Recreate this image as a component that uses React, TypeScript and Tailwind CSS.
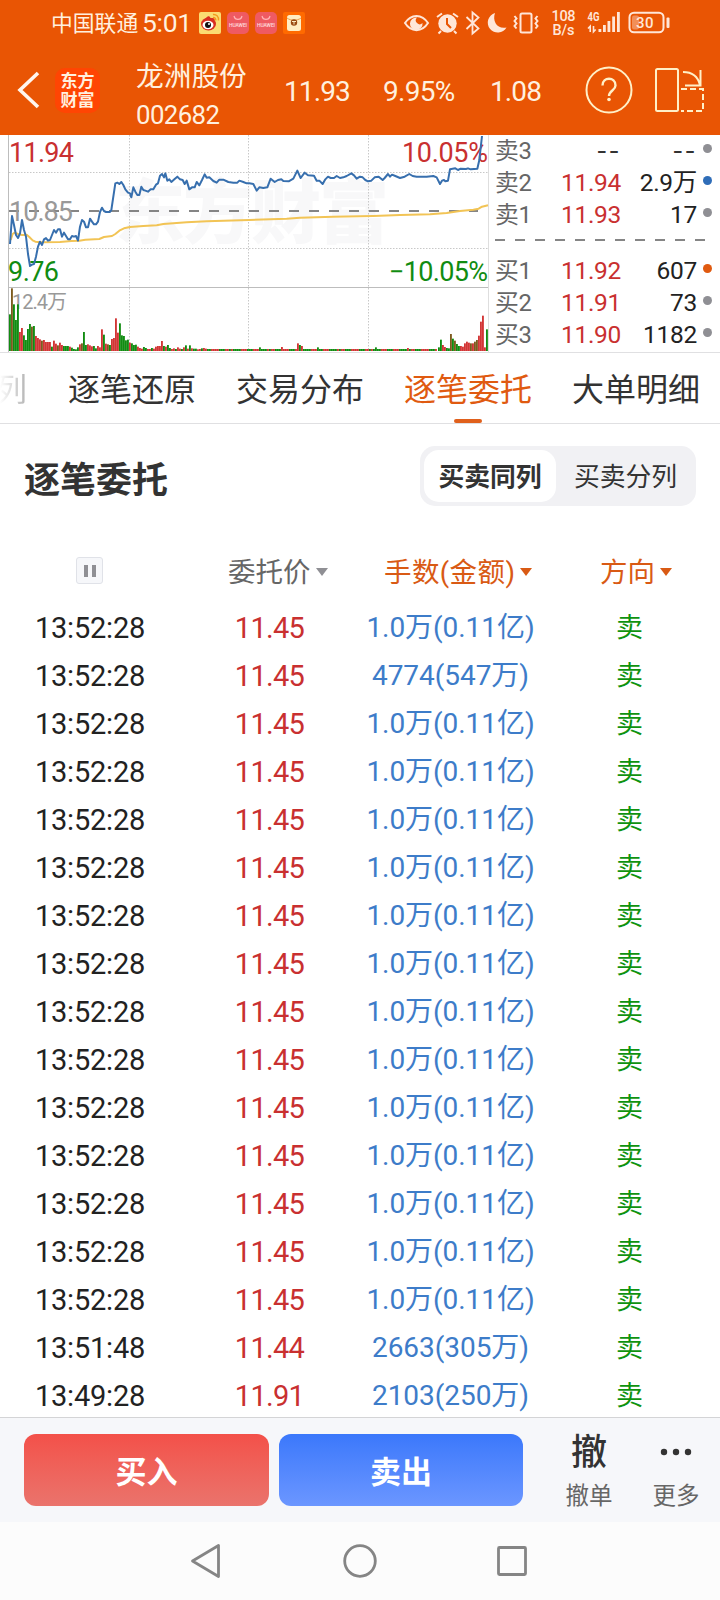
import React from "react";

type Tone = "r" | "g" | "b";

const PRICE_LINE =
  "30,342 36,258 42,285 48,315 54,324 60,310 66,270 72,300 78,320 84,372 90,408 96,404 102,402 108,380 114,350 120,335 126,345 132,328 138,324 144,332 150,330 156,315 162,300 168,308 174,298 180,298 186,320 192,308 198,318 204,328 210,328 216,318 222,320 228,318 234,332 240,290 246,270 252,275 258,292 264,292 270,266 276,275 282,283 288,283 294,275 300,246 306,233 312,243 318,246 330,246 334,240 340,200 346,160 352,158 358,162 364,156 370,165 376,178 384,188 390,190 394,202 400,172 406,185 412,195 418,195 424,170 430,180 436,182 444,185 452,178 460,178 468,164 474,160 480,137 486,132 492,142 496,130 502,152 508,148 514,156 524,147 532,140 540,148 548,150 554,162 560,152 568,178 576,172 584,172 590,156 598,166 606,150 614,133 620,143 628,142 640,153 650,158 658,149 670,149 685,156 700,158 712,158 718,152 730,156 740,160 748,160 760,162 770,182 778,172 790,174 802,172 812,146 824,156 834,150 844,148 850,153 866,154 880,146 892,122 902,144 914,128 924,136 942,137 950,152 958,152 968,162 976,148 984,140 992,144 1002,144 1010,138 1020,144 1030,142 1040,138 1054,130 1062,136 1070,146 1080,140 1088,142 1096,150 1104,154 1114,152 1124,142 1136,140 1148,150 1154,144 1164,132 1170,140 1176,134 1186,138 1200,144 1214,140 1228,132 1238,138 1250,140 1280,140 1300,138 1310,142 1320,162 1326,152 1332,150 1336,154 1344,152 1350,118 1366,115 1374,120 1382,116 1398,117 1404,115 1412,118 1432,116 1438,90 1446,18";

const AVG_LINE =
  "32,330 38,312 44,308 54,312 66,315 80,314 88,321 98,331 106,335 120,337 180,336 214,333 238,332 256,329 298,327 312,321 336,318 346,312 358,302 372,295 390,291 430,288 470,286 490,282 560,277 620,274 748,270 860,266 900,263 1000,260 1120,258 1200,255 1290,253 1340,249 1380,243 1420,239 1436,236 1446,230 1464,226";

const OPEN_BARS: [number, Tone][] = [
  [553, "g"], [475, "b"], [523, "g"], [570, "g"], [523, "g"], [606, "r"], [594, "r"], [616, "g"], [630, "g"], [597, "g"],
  [582, "g"], [590, "b"], [588, "g"], [618, "r"], [624, "r"], [628, "r"], [632, "b"], [630, "r"], [636, "r"], [636, "r"],
  [636, "r"], [650, "g"], [632, "r"], [641, "r"], [646, "b"], [638, "r"], [645, "r"], [648, "g"], [648, "g"], [648, "g"],
  [650, "r"], [653, "g"], [657, "g"], [658, "g"], [652, "g"], [643, "r"], [640, "b"], [606, "g"], [645, "g"], [643, "r"],
  [646, "r"], [649, "r"], [648, "g"], [655, "g"], [648, "r"], [652, "r"], [598, "r"], [614, "g"], [641, "r"], [643, "b"],
  [645, "g"], [627, "r"], [624, "r"], [565, "r"], [608, "r"], [580, "g"], [616, "g"], [618, "g"], [631, "g"], [629, "g"],
  [638, "r"], [640, "g"], [645, "g"], [644, "g"], [650, "r"], [654, "r"], [656, "r"], [651, "g"], [654, "g"], [657, "r"],
  [657, "r"], [654, "g"], [656, "r"], [650, "r"], [648, "r"], [648, "r"], [633, "r"], [648, "g"], [650, "r"], [645, "g"],
  [654, "g"], [657, "r"], [655, "r"], [657, "g"], [652, "r"], [656, "r"], [657, "g"], [652, "r"], [646, "g"], [656, "r"],
  [646, "g"], [655, "r"], [656, "g"], [656, "g"], [658, "r"], [657, "r"], [655, "g"], [654, "r"], [656, "r"],
];

const CLOSE_BARS: [number, Tone][] = [
  [652, "g"], [629, "g"], [645, "r"], [651, "r"], [654, "g"], [655, "g"], [612, "b"], [626, "g"], [632, "b"], [642, "g"],
  [648, "g"], [648, "r"], [650, "r"], [640, "r"], [635, "r"], [638, "r"], [640, "b"], [640, "r"], [635, "b"], [630, "b"],
  [617, "r"], [575, "r"], [557, "r"], [652, "r"], [598, "g"],
];

const MID_PEAKS: Record<number, number> = { 125: 652, 136: 651, 144: 640, 145: 645, 146: 648, 154: 652, 183: 652, 199: 654 };

const FILL: Record<Tone, string> = { r: "#d23535", g: "#118c11", b: "#7d5b1e" };

function volumeBars() {
  const bars: { x: number; top: number; tone: Tone }[] = [];
  for (let i = 0; 27 + i * 6 < 1310; i++) {
    const known = OPEN_BARS[i];
    const tone: Tone = i === 144 ? "r" : i % 7 < 3 ? "g" : i % 5 === 0 ? "g" : "r";
    bars.push({ x: 27 + i * 6, top: known ? known[0] : (MID_PEAKS[i] ?? 657), tone: known ? known[1] : tone });
  }
  CLOSE_BARS.forEach(([top, tone], i) => bars.push({ x: 1314 + i * 6, top, tone }));
  return bars;
}

function StatusIcons() {
  return (
    <svg className="block h-[46px] w-[280px]" viewBox="400 0 280 46" fill="none" stroke="#ffe6d8" strokeWidth="2">
      <path d="M405 23c6-9.500 17-9.500 23 0c-6 9.500-17 9.500-23 0Z" />
      <path d="M417 17.500a6.300 6.300 0 1 0 5.500 5.500a3.500 3.500 0 0 1-5.500-5.500Z" fill="#ffe6d8" stroke="none" />
      <circle cx="447.500" cy="23.500" r="9.200" fill="#ffe6d8" stroke="none" />
      <path d="M447 18v6l4 4" stroke="#e95504" />
      <path d="M437 17l5-3.500M458 17l-5-3.500M441 31l-2.500 2.500M454 31l2.500 2.500" />
      <path d="M466.500 17l12 11.500l-6 5V12.500l6 5l-12 11.500" strokeWidth="1.800" />
      <path d="M495 13a10 10 0 1 0 11.500 14.500c-9 2-14.500-6-11.500-14.500Z" fill="#ffe6d8" stroke="none" />
      <rect x="520.500" y="13.500" width="11" height="19" rx="1.500" />
      <path d="M514.500 16l2 2.500l-2 2.500l2 2.500l-2 2.500l2 2.500M537.500 16l-2 2.500l2 2.500l-2 2.500l2 2.500l-2 2.500" strokeWidth="2" />
      <g fill="#ffe6d8" stroke="none" fontFamily="Roboto, sans-serif" fontWeight="500">
        <text x="551.500" y="20.500" fontSize="14.500" textLength="24">108</text>
        <text x="552.500" y="35" fontSize="14.500" textLength="22">B/s</text>
        <text x="587.500" y="20.500" fontSize="12" fontWeight="700" textLength="12" lengthAdjust="spacingAndGlyphs">4G</text>
        <rect x="598.500" y="29" width="2.800" height="3" />
        <rect x="603" y="25" width="2.800" height="7" />
        <rect x="607.500" y="21" width="2.800" height="11" />
        <rect x="612.200" y="16.500" width="2.800" height="15.500" />
        <rect x="617" y="12" width="2.800" height="20" />
        <rect x="632" y="15.500" width="7" height="14" rx="2" opacity="0.400" />
        <text x="636" y="27.500" fontSize="15" textLength="17.500">30</text>
        <rect x="666.500" y="17.500" width="3" height="10.500" rx="1" />
      </g>
      <path d="M588 28.500l2.200-2.200v5.700M593.500 26v5.700l2.200-2.200" strokeWidth="1.600" />
      <rect x="629.500" y="12.700" width="34" height="19.600" rx="4.500" />
    </svg>
  );
}

function NoticeIcons() {
  return (
    <svg className="block h-[22px] w-[106px]" viewBox="199 12 106 22">
      <rect x="199" y="12" width="22" height="22" rx="2" fill="#fbdc72" />
      <ellipse cx="208.500" cy="24" rx="7.500" ry="6.500" fill="#d92d20" />
      <path d="M206 18c2-3 5-2 4 1c3-2 6-1 4 3" fill="#d92d20" />
      <ellipse cx="208" cy="25" rx="5.500" ry="4.200" fill="#fff" />
      <circle cx="208" cy="25" r="3" fill="#111" />
      <circle cx="209" cy="24" r="1" fill="#fff" />
      <path d="M213 14.500c3-.5 6 2 5.500 6M213 17.500c2 0 3 1 2.800 3" fill="none" stroke="#f39a1e" strokeWidth="1.400" />
      {[227, 255].map((x) => (
        <g key={x}>
          <rect x={x} y="12" width="22" height="22" rx="5" fill="#ef5a62" />
          <path d={`M${x + 7} 16c1 4.500 7 4.500 8 0`} fill="none" stroke="#ffb5b5" strokeWidth="1.200" />
          <text x={x + 2} y="26.500" fontSize="5" fontWeight="500" fontFamily="Roboto, sans-serif" fill="#ffdede" textLength="18">
            HUAWEI
          </text>
        </g>
      ))}
      <rect x="283" y="12" width="22" height="22" rx="2" fill="#ff6a00" />
      <rect x="287" y="15" width="14" height="16" rx="2.500" fill="#ffedc2" />
      <path d="M287 18c4 3 10 3 14 0" fill="none" stroke="#e8a04e" />
      <circle cx="294" cy="22.500" r="3.200" fill="#9a4b12" />
      <path d="M292 21.500h4M294 21.500v3" stroke="#ffedc2" strokeWidth="1" />
    </svg>
  );
}

function Header() {
  return (
    <header className="h-[135px] bg-[#e95504] text-[#fff0df]">
      <div className="flex h-[46px] items-center pl-[51px]">
        <span className="w-[91px] pt-px text-[21.800px] leading-[45px] font-normal">中国联通</span>
        <span className="w-[57px] text-[26.500px] leading-[46px] tracking-[-0.300px]">5:01</span>
        <NoticeIcons />
        <div className="ml-[95px]">
          <StatusIcons />
        </div>
      </div>
      <div className="flex h-[89px] items-start">
        <svg className="mt-[24px] ml-[14px] h-[40px] w-[30px]" viewBox="14 70 30 40" fill="none" stroke="#fff6ee" strokeWidth="3.600">
          <path d="M38 73L20 90L38 107" />
        </svg>
        <div className="mt-[22px] ml-[11px] flex h-[45px] w-[45px] flex-col items-center justify-center rounded-[10px] bg-[#ff4503] text-[17px] leading-[19px] font-bold text-[#fff0df]">
          <span>东方</span>
          <span>财富</span>
        </div>
        <div className="ml-[36px] flex w-[148px] flex-col pt-[12px]">
          <span className="text-[27.700px] leading-[38px]">龙洲股份</span>
          <span className="text-[25.800px] leading-[38px] tracking-[-0.600px]">002682</span>
        </div>
        <span className="w-[99px] text-[28px] leading-[91px] tracking-[-0.900px]">11.93</span>
        <span className="w-[107px] text-[28px] leading-[91px] tracking-[-0.700px]">9.95%</span>
        <span className="w-[93px] text-[28px] leading-[91px] tracking-[-0.900px]">1.08</span>
        <svg className="mt-[18px] block h-[52px] w-[126px]" viewBox="583 64 126 52" fill="none" stroke="#fff0c8" strokeWidth="2">
          <circle cx="609" cy="90" r="22.500" />
          <path d="M602.500 85.500c0-9 13-9 13 0c0 5-6.500 5-6.500 10.500" strokeWidth="2.400" />
          <circle cx="609" cy="99.500" r="1.800" fill="#fff0c8" stroke="none" />
          <rect x="656" y="69" width="22" height="42" rx="1.500" />
          <path d="M681 89h22v22h-22" strokeDasharray="6 3" />
          <path d="M683 72c9 0 15 5 17 13M700.500 70v15.500h-15.500" />
        </svg>
      </div>
    </header>
  );
}

function IntradayChart() {
  return (
    <svg className="block h-[217px] w-[489px] shrink-0" viewBox="0 135 489 217">
      <g fontFamily="'Noto Sans CJK SC', sans-serif" fontWeight="900" fontSize="70" fill="#f8f8f9">
        <text x="115" y="238" textLength="274">东方财富</text>
      </g>
      <g stroke="#c8c8c8" strokeDasharray="1.500 1.500" fill="none">
        <path d="M129.500 135V351M248.500 135V351M368.500 135V351M9 172.500H488M9 248.500H488" />
      </g>
      <path d="M8.500 135V352M489 135V352M8 287.500H488" stroke="#bdbdbd" />
      <path d="M9 211H478" stroke="#858585" strokeWidth="2" strokeDasharray="10 10" />
      <g fontFamily="Roboto, 'Noto Sans CJK SC', sans-serif" fontSize="27">
        <text x="9" y="220.500" fill="#999" textLength="64">10.85</text>
        <text x="12" y="309" fontSize="20" fill="#999" textLength="55">12.4万</text>
        <text x="9" y="162" fill="#c93030" textLength="65">11.94</text>
        <text x="402" y="162" fill="#c93030" textLength="86">10.05%</text>
        <text x="8" y="280.500" fill="#118c11" textLength="51">9.76</text>
        <text x="389" y="280.500" fill="#118c11" textLength="99">−10.05%</text>
      </g>
      <g transform="translate(0 130) scale(0.33333)" fill="none" strokeLinejoin="round">
        {volumeBars().map((bar) => (
          <rect key={bar.x} x={bar.x} y={bar.top} width="5.600" height={663 - bar.top} fill={FILL[bar.tone]} />
        ))}
        <polyline points={AVG_LINE} stroke="#f2c455" strokeWidth="6" />
        <polyline points={PRICE_LINE} stroke="#376fae" strokeWidth="6" />
      </g>
    </svg>
  );
}

type Quote = { label: string; price: string; volume: string; dot: string };

const ASKS: Quote[] = [
  { label: "卖3", price: "--", volume: "--", dot: "bg-[#8f8f94]" },
  { label: "卖2", price: "11.94", volume: "2.9万", dot: "bg-[#2f6db8]" },
  { label: "卖1", price: "11.93", volume: "17", dot: "bg-[#8f8f94]" },
];
const BIDS: Quote[] = [
  { label: "买1", price: "11.92", volume: "607", dot: "bg-[#e05a10]" },
  { label: "买2", price: "11.91", volume: "73", dot: "bg-[#8f8f94]" },
  { label: "买3", price: "11.90", volume: "1182", dot: "bg-[#8f8f94]" },
];

const DASHES = "font-['Noto_Sans_CJK_SC',sans-serif] text-[29px] leading-[25px] tracking-[2px] text-[#333]";

function QuoteRow({ quote }: { quote: Quote }) {
  const empty = quote.price === "--";
  return (
    <div className="flex h-[32px] text-[24.500px] leading-[32px] tracking-[-0.300px]">
      <span className="w-[46px] text-[23.800px]  text-[#666]">{quote.label}</span>
      <span className={`w-[80px] text-right ${empty ? DASHES : "text-[#c93030]"}`}>{quote.price}</span>
      <span className={`w-[76px] text-right ${empty ? DASHES : "text-[#222]"}`}>{quote.volume}</span>
      <span className={`mt-[9px] ml-[6px] h-[9px] w-[9px] rounded-full ${quote.dot}`} />
    </div>
  );
}

function OrderBook() {
  return (
    <div className="h-[217px] flex-1 pl-[6px]">
      {ASKS.map((q) => (
        <QuoteRow key={q.label} quote={q} />
      ))}
      <svg className="block h-[24px] w-[211px]" viewBox="0 0 211 24">
        <path d="M0 9H211" stroke="#858585" strokeWidth="2" strokeDasharray="10 10" />
      </svg>
      {BIDS.map((q) => (
        <QuoteRow key={q.label} quote={q} />
      ))}
    </div>
  );
}

function Tabs() {
  return (
    <nav className="flex h-[72px] gap-[40px] overflow-hidden border-t border-b border-[#e0e0e2] text-[32px] leading-[75px] whitespace-nowrap text-[#333]">
      <span className="-ml-[5px] w-[33px] shrink-0 bg-linear-to-r from-white from-15% to-[#b0b0b0] bg-clip-text text-transparent">列</span>
      <span className="w-[128px] shrink-0">逐笔还原</span>
      <span className="w-[128px] shrink-0">交易分布</span>
      <span className="flex w-[128px] shrink-0 flex-col items-center text-[#e05a10]">
        <span className="h-[66px]">逐笔委托</span>
        <span className="h-[4px] w-[28px] rounded-[2px] bg-[#e0601c]" />
      </span>
      <span className="w-[128px] shrink-0">大单明细</span>
    </nav>
  );
}

function Caret({ color }: { color: string }) {
  return (
    <svg className="h-[8px] w-[12px]" viewBox="0 0 12 8" fill={color}>
      <path d="M0 0H12L6 8Z" />
    </svg>
  );
}

const ORDERS: [string, string, string][] = [
  ["13:52:28", "11.45", "1.0万(0.11亿)"],
  ["13:52:28", "11.45", "4774(547万)"],
  ...Array.from({ length: 13 }, (): [string, string, string] => ["13:52:28", "11.45", "1.0万(0.11亿)"]),
  ["13:51:48", "11.44", "2663(305万)"],
  ["13:49:28", "11.91", "2103(250万)"],
];

function OrderTable() {
  return (
    <section className="h-[993px] overflow-hidden">
      <div className="flex h-[110px] items-center justify-between pr-[24px] pl-[24px]">
        <h1 className="pt-[3px] text-[36px] leading-[54px] font-bold text-[#333]">逐笔委托</h1>
        <div className="-mt-[6px] flex h-[60px] w-[276px] rounded-[15px] bg-[#f1f1f4] p-[4px] text-[25.800px] leading-[55px] text-[#333]">
          <span className="h-[52px] w-[132px] rounded-[15px] bg-white text-center font-bold">买卖同列</span>
          <span className="h-[52px] w-[136px] pl-[3px] text-center">买卖分列</span>
        </div>
      </div>
      <div className="flex h-[70px] items-center pt-[5px] text-[27.500px]">
        <div className="ml-[76px] -mt-[2px] flex h-[27px] w-[27px] items-center justify-center gap-[4px] rounded-[3px] border border-[#e0e2e8] bg-[#f6f7fa]">
          <span className="h-[12px] w-[4px] bg-[#8f8f94]" />
          <span className="h-[12px] w-[4px] bg-[#8f8f94]" />
        </div>
        <div className="ml-[125px] flex w-[156px] items-center text-[#666]">
          <span className="w-[88px] pt-[3px]">委托价</span>
          <Caret color="#8f8f94" />
        </div>
        <div className="flex w-[216px] items-center text-[#d95a14]">
          <span className="w-[136px] pt-[3px] tracking-[0.400px]">手数(金额)</span>
          <Caret color="#d95a14" />
        </div>
        <div className="flex items-center text-[#d95a14]">
          <span className="w-[60px] pt-[3px]">方向</span>
          <Caret color="#d95a14" />
        </div>
      </div>
      {ORDERS.map(([time, price, amount], i) => (
        <div key={i} className="flex h-[48px] text-[29px] leading-[48px] tracking-[-0.200px]">
          <span className="ml-[30px] w-[120px] text-center text-[#222]">{time}</span>
          <span className="ml-[70px] w-[99px] text-center tracking-[-0.700px] text-[#c93030]">{price}</span>
          <span className="ml-[31px] w-[201px] text-center text-[28px] tracking-[-0.050px] text-[#3d7cc9]">{amount}</span>
          <span className="ml-[65px] text-[27px] text-[#0f930f]">卖</span>
        </div>
      ))}
    </section>
  );
}

function ActionBar() {
  return (
    <footer className="flex h-[105px] border-t border-[#d4d4d6] bg-[#f6f7fa] pt-[16px] pl-[24px]">
      <button className="h-[72px] w-[245px] rounded-[12px] bg-linear-to-b from-[#f35049] to-[#ea736c] pt-[6px] text-[31px] font-bold text-white">买入</button>
      <button className="ml-[10px] h-[72px] w-[244px] rounded-[12px] bg-linear-to-b from-[#3b78fb] to-[#6b96ff] pt-[6px] text-[31px] font-bold text-white">卖出</button>
      <div className="ml-[36px] flex w-[60px] flex-col items-center">
        <span className="pt-px text-[36px] leading-[36px] font-medium text-[#333]">撤</span>
        <span className="pt-[7px] text-[23.500px] leading-[36px] text-[#666]">撤单</span>
      </div>
      <div className="ml-[27px] flex w-[60px] flex-col items-center">
        <svg className="block h-[37px] w-[32px]" viewBox="0 0 32 37" fill="#333">
          <circle cx="4" cy="18" r="3.200" />
          <circle cx="16" cy="18" r="3.200" />
          <circle cx="28" cy="18" r="3.200" />
        </svg>
        <span className="pt-[7px] text-[23.500px] leading-[36px] text-[#666]">更多</span>
      </div>
    </footer>
  );
}

function SystemNav() {
  return (
    <svg className="block h-[78px] w-[720px] bg-[#fcfcfc]" viewBox="0 1522 720 78" fill="none" stroke="#858585" strokeWidth="2.800" strokeLinejoin="round">
      <path d="M192.500 1561L218.500 1545.500V1576.500Z" />
      <circle cx="360" cy="1561" r="15.300" />
      <rect x="498.500" y="1547.500" width="27" height="27" rx="1" />
    </svg>
  );
}

export default function App() {
  return (
    <main className="h-[1600px] w-[720px] overflow-hidden bg-[#fcfcfc] font-['Roboto','Noto_Sans_CJK_SC',sans-serif]">
      <Header />
      <div className="flex h-[217px] bg-white">
        <IntradayChart />
        <OrderBook />
      </div>
      <div className="bg-white">
        <Tabs />
        <OrderTable />
      </div>
      <ActionBar />
      <SystemNav />
    </main>
  );
}
